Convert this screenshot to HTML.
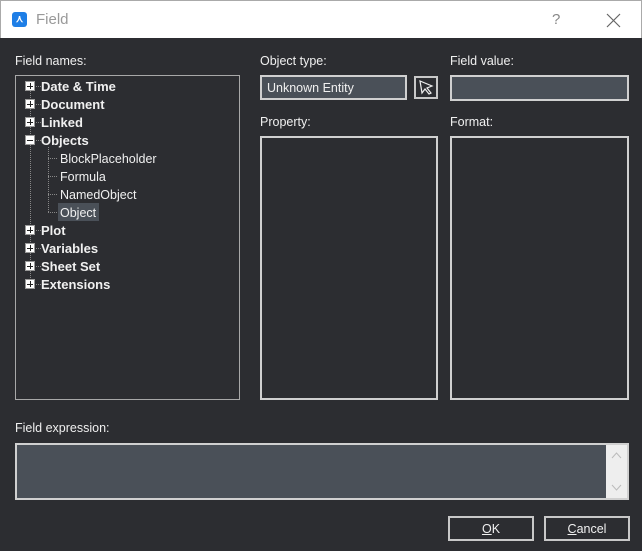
<!DOCTYPE html>
<html><head><style>
*{margin:0;padding:0;box-sizing:border-box}
body{width:642px;height:551px;background:#2c2d31;font-family:"Segoe UI","Liberation Sans",sans-serif;font-size:12.5px;color:#f0f0f0;position:relative;overflow:hidden}
.abs{position:absolute}
.title{left:0;top:0;width:642px;height:38px;background:#fff;border:1px solid #aaa;border-bottom:none}
.box{border:1px solid #a8a8a8}
.in{background:#4a5058;border:2px solid #d0d0d0}
.row{position:absolute;left:41px;font-weight:bold;font-size:13px;line-height:16px}
.pl{position:absolute;left:25px;width:10px;height:10px;background:#fff;border:1px solid #999}
.pl:before{content:"";position:absolute;left:1px;top:3.5px;width:6px;height:1px;background:#222}
.pl.p:after{content:"";position:absolute;left:3.5px;top:1px;width:1px;height:6px;background:#222}
.ch{position:absolute;left:60px;font-size:12.5px;line-height:16px}
.btn{border:2px solid #c8c8c8;background:#2c2d31;text-align:center;line-height:22px;font-size:12.5px}
</style></head><body>
<div class="abs title">
 <div class="abs" style="left:11px;top:11px;width:15px;height:15px;background:#1e7ee6;border-radius:3px;color:#fff;font-size:10px;line-height:15px;text-align:center;font-weight:bold">⋏</div>
 <div class="abs" style="left:35px;top:10px;font-size:15px;color:#999">Field</div>
 <div class="abs" style="left:551px;top:10px;font-size:15px;color:#888">?</div>
 <svg class="abs" style="left:605px;top:12px" width="15" height="15"><path d="M1 1L14 14M14 1L1 14" stroke="#666" stroke-width="1.2"/></svg>
</div>
<div class="abs" style="left:15px;top:54px">Field names:</div>
<div class="abs box" style="left:15px;top:75px;width:225px;height:325px"></div>
<svg class="abs" style="left:0;top:0" width="240" height="300">
<g stroke="#888" stroke-dasharray="1 1" fill="none">
<path d="M30.5 91V280"/>
<path d="M36 86.5H41M36 104.5H41M36 122.5H41M36 140.5H41M36 230.5H41M36 248.5H41M36 266.5H41M36 284.5H41"/>
<path d="M48.5 147V212.5M48 158.5H58M48 176.5H58M48 194.5H58M48 212.5H58"/>
</g></svg>
<div class="pl p" style="top:81px"></div><div class="row" style="top:79px">Date &amp; Time</div>
<div class="pl p" style="top:99px"></div><div class="row" style="top:97px">Document</div>
<div class="pl p" style="top:117px"></div><div class="row" style="top:115px">Linked</div>
<div class="pl" style="top:135px"></div><div class="row" style="top:133px">Objects</div>
<div class="ch" style="top:151px">BlockPlaceholder</div>
<div class="ch" style="top:169px">Formula</div>
<div class="ch" style="top:187px">NamedObject</div>
<div class="abs" style="left:58px;top:203px;width:41px;height:18px;background:#4a5058"></div>
<div class="ch" style="top:205px">Object</div>
<div class="pl p" style="top:225px"></div><div class="row" style="top:223px">Plot</div>
<div class="pl p" style="top:243px"></div><div class="row" style="top:241px">Variables</div>
<div class="pl p" style="top:261px"></div><div class="row" style="top:259px">Sheet Set</div>
<div class="pl p" style="top:279px"></div><div class="row" style="top:277px">Extensions</div>

<div class="abs" style="left:260px;top:54px">Object type:</div>
<div class="abs in" style="left:260px;top:75px;width:147px;height:25px;padding:3px 5px;line-height:17px">Unknown Entity</div>
<div class="abs" style="left:414px;top:76px;width:24px;height:23px;border:2px solid #c8c8c8">
<svg width="20" height="19"><path d="M4 3L16 8L11 10L15 15L13 16L9 11L6 15Z" fill="none" stroke="#eee" stroke-width="1.2"/></svg></div>
<div class="abs" style="left:450px;top:54px">Field value:</div>
<div class="abs in" style="left:450px;top:75px;width:179px;height:26px"></div>
<div class="abs" style="left:260px;top:115px">Property:</div>
<div class="abs" style="left:260px;top:136px;width:178px;height:264px;border:2px solid #d0d0d0"></div>
<div class="abs" style="left:450px;top:115px">Format:</div>
<div class="abs" style="left:450px;top:136px;width:179px;height:264px;border:2px solid #d0d0d0"></div>

<div class="abs" style="left:15px;top:421px">Field expression:</div>
<div class="abs in" style="left:15px;top:443px;width:614px;height:57px"></div>
<div class="abs" style="left:606px;top:445px;width:21px;height:53px;background:#eee"></div>
<svg class="abs" style="left:611px;top:452px" width="11" height="8"><path d="M1 6L5.5 1L10 6" stroke="#bbb" fill="none"/></svg>
<svg class="abs" style="left:611px;top:484px" width="11" height="8"><path d="M1 1L5.5 6L10 1" stroke="#bbb" fill="none"/></svg>
<div class="abs btn" style="left:448px;top:516px;width:86px;height:25px"><u>O</u>K</div>
<div class="abs btn" style="left:544px;top:516px;width:86px;height:25px"><u>C</u>ancel</div>
</body></html>
